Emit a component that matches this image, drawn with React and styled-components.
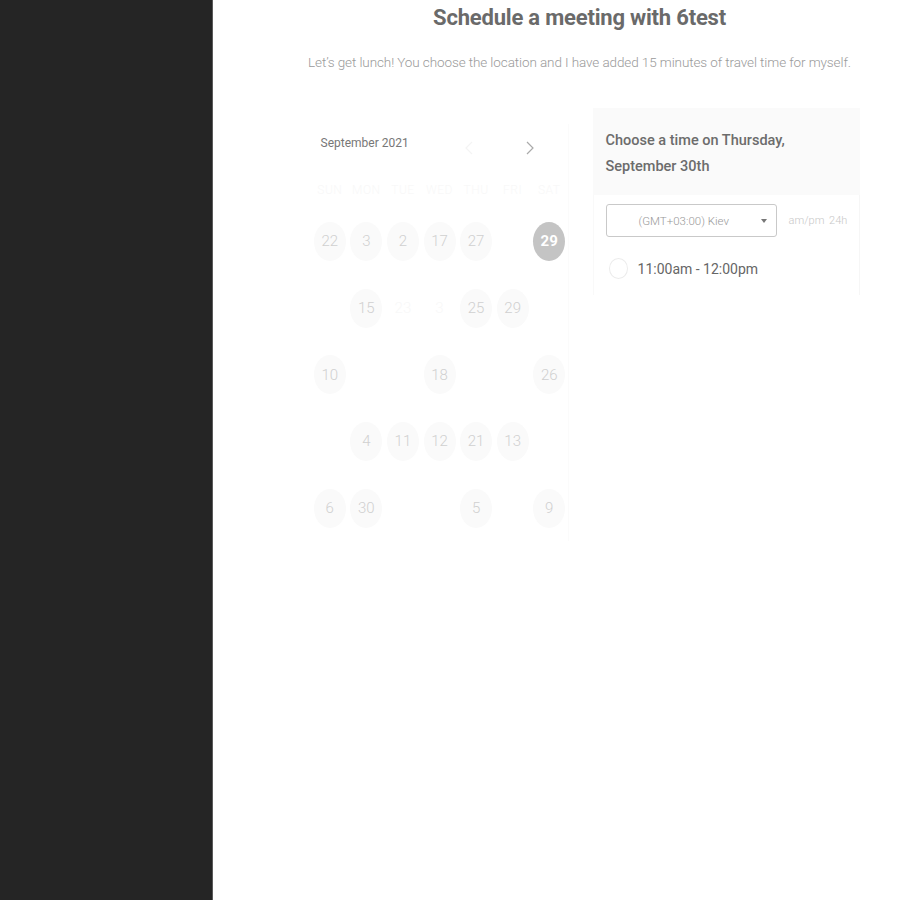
import React from "react";
import styled, { createGlobalStyle } from "styled-components";

const Global = createGlobalStyle`
  html, body { margin: 0; padding: 0; height: 100%; }
  body { font-family: Roboto, "Liberation Sans", sans-serif; background: #fff; }
  #root { height: 100%; }
`;

const Page = styled.div`
  display: flex;
  min-height: 900px;
`;

const Sidebar = styled.aside`
  width: 212px;
  flex-shrink: 0;
  background: #252525;
  border-right: 1px solid #5a5a5a;
`;

const Main = styled.main`
  flex: 1;
  display: flex;
  justify-content: center;
  padding: 0 40px 0 86px;
`;

const Content = styled.div`
  width: 560px;
  display: flex;
  flex-direction: column;
  align-items: center;
`;

const Title = styled.h1`
  margin: 4px 0 0;
  font-size: 22px;
  font-weight: 700;
  color: #6a6a6a;
  line-height: 28px;
  letter-spacing: -0.2px;
`;

const Subtitle = styled.p`
  margin: 21px 0 0;
  font-size: 13.5px;
  font-weight: 300;
  color: #9a9a9a;
  line-height: 18px;
  white-space: nowrap;
  letter-spacing: -0.1px;
`;

const Columns = styled.div`
  align-self: stretch;
  display: flex;
  align-items: flex-start;
  gap: 24px;
  margin-top: 37px;
`;

const Calendar = styled.div`
  width: 257px;
  margin: 16px 0 0 12px;
  border-right: 1px solid #fbfbfb;
`;

const MonthBar = styled.div`
  display: flex;
  align-items: center;
  height: 30px;
  margin-top: 4px;
  padding: 0 28px 0 9px;
`;

const MonthLabel = styled.span`
  font-size: 12px;
  color: #777;
  flex: 1;
`;

const Nav = styled.button`
  border: none;
  background: none;
  padding: 0;
  width: 20px;
  height: 20px;
  margin-top: 10px;
  display: flex;
  align-items: center;
  justify-content: center;
  margin-left: ${(p) => p.$gap || 0}px;
  color: ${(p) => p.$color};
`;

const Grid = styled.div`
  display: grid;
  grid-template-columns: repeat(7, 1fr);
`;

const WeekDay = styled.div`
  text-align: center;
  font-size: 12px;
  font-weight: 300;
  color: #f8f8f8;
  height: 20px;
  line-height: 20px;
  margin-top: 22px;
  letter-spacing: 0.5px;
`;

const Cell = styled.div`
  height: 66.7px;
  display: flex;
  align-items: center;
  justify-content: center;
  &:nth-child(-n + 7) {
    margin-top: 8px;
  }
`;

const Day = styled.div`
  width: 32px;
  height: 39px;
  border-radius: 50%;
  display: flex;
  align-items: center;
  justify-content: center;
  font-size: 15px;
  font-weight: ${(p) => (p.$selected ? 700 : 300)};
  color: ${(p) => (p.$selected ? "#fff" : p.$ghost ? "#f8f8f8" : "#d0d0d0")};
  background: ${(p) => (p.$selected ? "#c4c4c4" : p.$ghost ? "transparent" : "#fafafa")};
`;

const Panel = styled.div`
  width: 268px;
`;

const PanelHead = styled.div`
  background: #fafafa;
  padding: 20px 13px 15px;
  font-size: 14.5px;
  font-weight: 500;
  color: #6c6c6c;
  line-height: 26px;
`;

const PanelBody = styled.div`
  height: 100px;
  border-left: 1px solid #f9f9f9;
  border-right: 1px solid #f6f6f6;
`;

const TzRow = styled.div`
  display: flex;
  align-items: center;
  padding: 9px 0 0 12px;
  gap: 12px;
`;

const Select = styled.div`
  width: 171px;
  height: 33px;
  border: 1px solid #c9c9c9;
  border-radius: 3px;
  display: flex;
  align-items: center;
  justify-content: space-between;
  padding: 0 9px 0 32px;
  box-sizing: border-box;
  font-size: 11.5px;
  font-weight: 300;
  color: #999;
`;

const Caret = styled.span`
  width: 0;
  height: 0;
  border-left: 3px solid transparent;
  border-right: 3px solid transparent;
  border-top: 4px solid #777;
`;

const Toggle = styled.span`
  font-size: 11px;
  font-weight: 300;
  color: #c8c8c8;
  word-spacing: 2px;
`;

const Slot = styled.div`
  display: flex;
  align-items: center;
  gap: 10px;
  padding: 21px 0 0 15px;
`;

const Radio = styled.span`
  width: 19px;
  height: 21px;
  border-radius: 50%;
  border: 1px solid #ececec;
  box-sizing: border-box;
`;

const SlotText = styled.span`
  font-size: 14px;
  color: #666;
`;

const weekdays = ["SUN", "MON", "TUE", "WED", "THU", "FRI", "SAT"];

const rows = [
  ["22", "3", "2", "17", "27", null, { t: "29", sel: true }],
  [null, "15", { t: "23", ghost: true }, { t: "3", ghost: true }, "25", "29", null],
  ["10", null, null, "18", null, null, "26"],
  [null, "4", "11", "12", "21", "13", null],
  ["6", "30", null, null, "5", null, "9"],
];

const Chevron = ({ dir }) => (
  <svg width="10" height="16" viewBox="0 0 10 16" fill="none">
    <path
      d={dir === "left" ? "M8 2 L2 8 L8 14" : "M2 2 L8 8 L2 14"}
      stroke="currentColor"
      strokeWidth="1.2"
    />
  </svg>
);

export default function App() {
  return (
    <>
      <Global />
      <Page>
        <Sidebar />
        <Main>
          <Content>
            <Title>Schedule a meeting with 6test</Title>
            <Subtitle>
              Let’s get lunch! You choose the location and I have added 15 minutes of travel time for myself.
            </Subtitle>
            <Columns>
              <Calendar>
                <MonthBar>
                  <MonthLabel>September 2021</MonthLabel>
                  <Nav $color="#f4f4f4" aria-label="Previous month">
                    <Chevron dir="left" />
                  </Nav>
                  <Nav $color="#aaa" $gap={41} aria-label="Next month">
                    <Chevron dir="right" />
                  </Nav>
                </MonthBar>
                <Grid>
                  {weekdays.map((w) => (
                    <WeekDay key={w}>{w}</WeekDay>
                  ))}
                </Grid>
                <Grid>
                  {rows.flatMap((row, ri) =>
                    row.map((d, ci) => {
                      if (!d) return <Cell key={`${ri}-${ci}`} />;
                      const o = typeof d === "string" ? { t: d } : d;
                      return (
                        <Cell key={`${ri}-${ci}`}>
                          <Day $selected={o.sel} $ghost={o.ghost}>
                            {o.t}
                          </Day>
                        </Cell>
                      );
                    })
                  )}
                </Grid>
              </Calendar>
              <Panel>
                <PanelHead>
                  Choose a time on Thursday,
                  <br />
                  September 30th
                </PanelHead>
                <PanelBody>
                  <TzRow>
                    <Select>
                      <span>(GMT+03:00) Kiev</span>
                      <Caret />
                    </Select>
                    <Toggle>am/pm 24h</Toggle>
                  </TzRow>
                  <Slot>
                    <Radio />
                    <SlotText>11:00am - 12:00pm</SlotText>
                  </Slot>
                </PanelBody>
              </Panel>
            </Columns>
          </Content>
        </Main>
      </Page>
    </>
  );
}
